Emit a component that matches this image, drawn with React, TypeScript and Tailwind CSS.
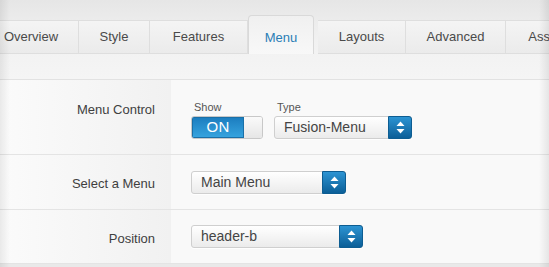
import React from "react";

const tabs = [
  { label: "Overview", w: "w-[95px]", extra: "-ml-[16px]" },
  { label: "Style", w: "w-[71px]", extra: "" },
  { label: "Features", w: "w-[98px]", extra: "" },
  { label: "Menu", w: "w-[66px]", extra: "", active: true },
  { label: "Layouts", w: "w-[88px]", extra: "ml-[4px]" },
  { label: "Advanced", w: "w-[100px]", extra: "" },
  { label: "Assignments", w: "w-[120px]", extra: "" },
];

function Arrows() {
  return (
    <svg width="9" height="13" viewBox="0 0 9 13">
      <path d="M4.5 0.5 L8.5 5 L0.5 5 Z" fill="#fff" />
      <path d="M4.5 12.5 L8.5 8 L0.5 8 Z" fill="#fff" />
    </svg>
  );
}

function Select({ value, width }: { value: string; width: string }) {
  return (
    <div
      className={`flex h-[23px] ${width} rounded-[3px] border border-[#cfcfcf] bg-gradient-to-b from-[#ffffff] to-[#ebebeb] shadow-[0_1px_0_rgba(255,255,255,0.8)]`}
    >
      <div className="flex flex-1 items-center pl-[9px] text-[14px] text-[#444]">
        {value}
      </div>
      <div className="-my-px -mr-px flex w-[24px] items-center justify-center rounded-r-[3px] border border-[#0d5d92] bg-gradient-to-b from-[#2c94d3] to-[#0b5f98]">
        <Arrows />
      </div>
    </div>
  );
}

function Row({
  label,
  height,
  children,
  top,
}: {
  label: string;
  height: string;
  children: React.ReactNode;
  top?: boolean;
}) {
  return (
    <div className={`flex ${height} border-b border-[#e4e4e4]`}>
      <div
        className={`flex w-[171px] justify-end bg-gradient-to-r from-[#fbfbfb] to-[#f1f1f1] pr-[16px] text-[13px] text-[#3f3f3f] ${
          top ? "items-start pt-[20px]" : "items-center pt-[4px]"
        }`}
      >
        {label}
      </div>
      <div
        className={`flex flex-1 bg-[#f9f9f9] pl-[20px] ${
          top ? "items-start pt-[21px]" : "items-center"
        }`}
      >
        {children}
      </div>
    </div>
  );
}

export default function App() {
  return (
    <div
      className="relative h-[267px] w-[549px] overflow-hidden bg-[#e9e9e9]"
      style={{ fontFamily: '"Liberation Sans", Arial, sans-serif' }}
    >
      {/* tab strip */}
      <div className="h-[80px] border-b border-[#e2e2e2] bg-gradient-to-b from-[#e6e6e6] via-[#f1f1f1] to-[#f5f5f5]">
        <div className="flex items-end pt-[15px]">
          {tabs.map((t) =>
            t.active ? (
              <div
                key={t.label}
                className={`flex h-[39px] ${t.w} ${t.extra} shrink-0 items-center justify-center rounded-t-[4px] border border-b-0 border-[#d9d9d9] bg-gradient-to-b from-[#f0f0f0] to-[#f8f8f8] pt-[6px] text-[13px] text-[#2a7db5]`}
              >
                {t.label}
              </div>
            ) : (
              <div
                key={t.label}
                className={`flex h-[34px] ${t.w} ${t.extra} shrink-0 items-center justify-center border-r border-t border-b border-[#dedede] bg-gradient-to-b from-[#f4f4f4] to-[#ebebeb] text-[13px] text-[#4a4a4a]`}
              >
                {t.label}
              </div>
            )
          )}
        </div>
      </div>

      <Row label="Menu Control" height="h-[75px]" top>
        <div className="flex gap-[11px]">
          <div className="flex flex-col">
            <span className="mb-[3px] pl-[3px] text-[11px] leading-[12px] text-[#555]">
              Show
            </span>
            <div className="flex h-[23px] w-[72px] overflow-hidden rounded-[3px] border border-[#c8c8c8]">
              <div className="flex w-[52px] items-center justify-center border border-[#1a70a8] bg-gradient-to-b from-[#1c7ec0] to-[#36a3de] text-[15px] tracking-wide text-white">
                ON
              </div>
              <div className="flex-1 bg-gradient-to-b from-[#fafafa] to-[#e6e6e6]" />
            </div>
          </div>
          <div className="flex flex-col">
            <span className="mb-[3px] pl-[3px] text-[11px] leading-[12px] text-[#555]">
              Type
            </span>
            <Select value="Fusion-Menu" width="w-[138px]" />
          </div>
        </div>
      </Row>

      <Row label="Select a Menu" height="h-[55px]">
        <Select value="Main Menu" width="w-[155px]" />
      </Row>

      <Row label="Position" height="h-[54px]">
        <Select value="header-b" width="w-[172px]" />
      </Row>

      {/* edge shading */}
      <div className="pointer-events-none absolute inset-y-0 left-0 w-[10px] bg-gradient-to-r from-[rgba(0,0,0,0.07)] to-transparent" />
      <div className="pointer-events-none absolute inset-y-0 right-0 w-[10px] bg-gradient-to-l from-[rgba(0,0,0,0.08)] to-transparent" />
    </div>
  );
}
